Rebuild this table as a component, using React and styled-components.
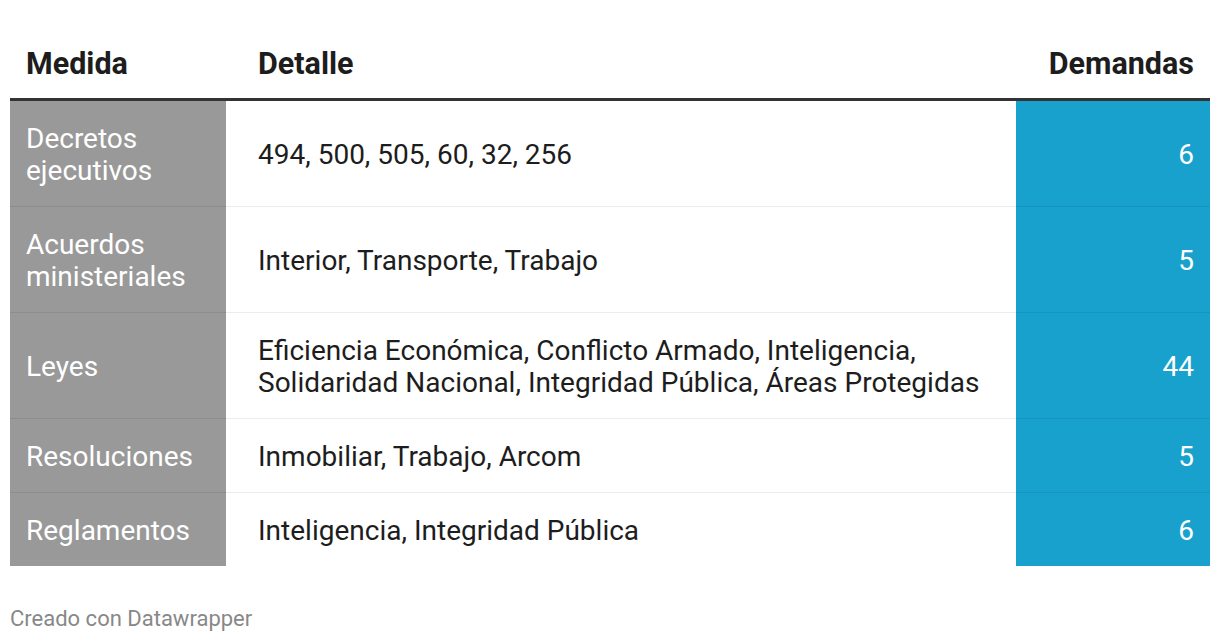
import React from 'react';
import styled, { createGlobalStyle } from 'styled-components';

const GlobalStyle = createGlobalStyle`
  body {
    margin: 0;
    background: #fff;
    font-family: Roboto, "Liberation Sans", sans-serif;
  }
`;

const Wrapper = styled.div`
  padding: 38px 10px 0;
`;

const Table = styled.table`
  width: 1200px;
  border-collapse: collapse;
  table-layout: fixed;
`;

const HeadCell = styled.th`
  font-size: 30.5px;
  font-weight: 700;
  line-height: 32px;
  color: #1d1d1d;
  text-align: ${(props) => props.align || 'left'};
  padding: 10px 16px 18px ${(props) => (props.wide ? '32px' : '16px')};
  border-bottom: 3px solid #333;
`;

const Row = styled.tr`
  & > td {
    border-bottom: ${(props) => (props.last ? 'none' : '1px solid rgba(0, 0, 0, 0.075)')};
  }
`;

const Cell = styled.td`
  font-size: 28px;
  line-height: 32px;
  padding: 21.5px 16px 19.5px ${(props) => (props.wide ? '32px' : '16px')};
  vertical-align: middle;
  text-align: ${(props) => props.align || 'left'};
  color: ${(props) => (props.bg ? '#fff' : '#1d1d1d')};
  background: ${(props) => props.bg || 'transparent'};
`;

const Footer = styled.div`
  margin-top: 40px;
  font-size: 22px;
  line-height: 25px;
  color: #888;
`;

const rows = [
  ['Decretos ejecutivos', '494, 500, 505, 60, 32, 256', 6],
  ['Acuerdos ministeriales', 'Interior, Transporte, Trabajo', 5],
  [
    'Leyes',
    'Eficiencia Económica, Conflicto Armado, Inteligencia, Solidaridad Nacional, Integridad Pública, Áreas Protegidas',
    44,
  ],
  ['Resoluciones', 'Inmobiliar, Trabajo, Arcom', 5],
  ['Reglamentos', 'Inteligencia, Integridad Pública', 6],
];

const App = () => {
  return (
    <Wrapper>
      <GlobalStyle />
      <Table>
        <colgroup>
          <col style={{ width: 216 }} />
          <col style={{ width: 790 }} />
          <col style={{ width: 194 }} />
        </colgroup>
        <thead>
          <tr>
            <HeadCell>Medida</HeadCell>
            <HeadCell wide>Detalle</HeadCell>
            <HeadCell align="right">Demandas</HeadCell>
          </tr>
        </thead>
        <tbody>
          {rows.map(([medida, detalle, n], i) => (
            <Row key={medida} last={i === rows.length - 1}>
              <Cell bg="#999999">{medida}</Cell>
              <Cell wide>{detalle}</Cell>
              <Cell bg="#18a1cd" align="right">
                {n}
              </Cell>
            </Row>
          ))}
        </tbody>
      </Table>
      <Footer>Creado con Datawrapper</Footer>
    </Wrapper>
  );
};

export default App;
